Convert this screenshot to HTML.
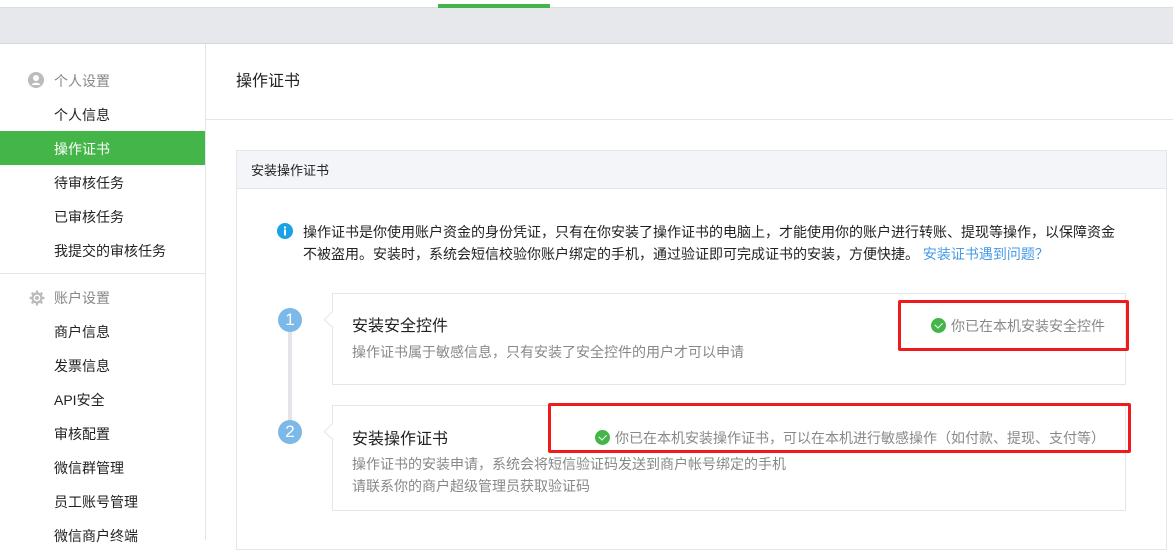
<!DOCTYPE html>
<html><head><meta charset="utf-8"><style>
*{margin:0;padding:0;box-sizing:border-box}
body{width:1173px;height:540px;overflow:hidden;background:#fff;font-family:"Liberation Sans","Noto Sans CJK SC",sans-serif;font-size:14px;color:#222;position:relative}
.a{position:absolute;white-space:nowrap}
.mi{position:absolute;left:54px;font-size:14px;color:#222;line-height:20px}
.g{color:#888}
.chk{display:inline-block;width:15px;height:15px;border-radius:50%;background:#44b549;vertical-align:-2px;margin-right:5px;position:relative}
.chk:after{content:"";position:absolute;left:4px;top:3.5px;width:6px;height:3.5px;border-left:1.6px solid #fff;border-bottom:1.6px solid #fff;transform:rotate(-45deg)}
.circ{position:absolute;left:278px;width:24px;height:24px;border-radius:50%;background:#7cb9e8;color:#fff;text-align:center;line-height:24px;font-size:17px}
.red{position:absolute;border:3px solid #f0191b;border-radius:2px}
</style></head><body>
<div class="a" style="left:0;top:7px;width:1173px;height:37px;background:#e7e8eb;border-top:1px solid #dcdde0;border-bottom:1px solid #d6d7da"></div>
<div class="a" style="left:438px;top:4px;width:112px;height:4px;background:#44b549"></div>
<div class="a" style="left:205px;top:44px;width:1px;height:496px;background:#e4e5e8"></div>
<svg class="a" style="left:28px;top:72px" width="16" height="16" viewBox="0 0 16 16"><circle cx="8" cy="8" r="8" fill="#bbb"/><circle cx="8" cy="6" r="3" fill="#fff"/><path d="M3.5 13c1-3 8-3 9 0z" fill="#fff"/></svg>
<div class="mi g" style="top:71px">个人设置</div>
<div class="mi" style="top:105px">个人信息</div>
<div class="a" style="left:0;top:131px;width:205px;height:34px;background:#44b549"></div>
<div class="mi" style="top:139px;color:#fff">操作证书</div>
<div class="mi" style="top:173px">待审核任务</div>
<div class="mi" style="top:207px">已审核任务</div>
<div class="mi" style="top:241px">我提交的审核任务</div>
<div class="a" style="left:0;top:273px;width:205px;height:1px;background:#e4e5e8"></div>
<svg class="a" style="left:29px;top:290px" width="16" height="16" viewBox="0 0 16 16"><g fill="none" stroke="#bbb" stroke-width="2.2"><circle cx="8" cy="8" r="4.5"/><path d="M8 0.5v3M8 12.5v3M0.5 8h3M12.5 8h3M2.7 2.7l2.1 2.1M11.2 11.2l2.1 2.1M2.7 13.3l2.1-2.1M11.2 4.8l2.1-2.1"/></g><circle cx="8" cy="8" r="2" fill="#bbb"/></svg>
<div class="mi g" style="top:288px">账户设置</div>
<div class="mi" style="top:322px">商户信息</div>
<div class="mi" style="top:356px">发票信息</div>
<div class="mi" style="top:390px">API安全</div>
<div class="mi" style="top:424px">审核配置</div>
<div class="mi" style="top:458px">微信群管理</div>
<div class="mi" style="top:492px">员工账号管理</div>
<div class="mi" style="top:526px">微信商户终端</div>
<div class="a" style="left:236px;top:71px;font-size:16px;line-height:22px">操作证书</div>
<div class="a" style="left:206px;top:119px;width:967px;height:1px;background:#e4e5e8"></div>
<div class="a" style="left:236px;top:150px;width:931px;height:400px;border:1px solid #e4e5e8"></div>
<div class="a" style="left:237px;top:151px;width:929px;height:38px;background:#f4f5f9;border-bottom:1px solid #e4e5e8"></div>
<div class="a" style="left:251px;top:161px;font-size:13px;line-height:20px">安装操作证书</div>
<svg class="a" style="left:277px;top:223px" width="16" height="16" viewBox="0 0 16 16"><circle cx="8" cy="8" r="8" fill="#1aa2e6"/><rect x="7" y="6.5" width="2" height="6" fill="#fff"/><rect x="7" y="3.5" width="2" height="2" fill="#fff"/></svg>
<div class="a" style="left:303px;top:221px;line-height:22px">操作证书是你使用账户资金的身份凭证，只有在你安装了操作证书的电脑上，才能使用你的账户进行转账、提现等操作，以保障资金<br>不被盗用。安装时，系统会短信校验你账户绑定的手机，通过验证即可完成证书的安装，方便快捷。 <span style="color:#459ae9">安装证书遇到问题？</span></div>
<div class="a" style="left:288px;top:330px;width:4px;height:100px;background:#e4e5e8"></div>
<div class="circ" style="top:308px">1</div>
<div class="circ" style="top:420px">2</div>
<div class="a" style="left:332px;top:293px;width:794px;height:92px;border:1px solid #e4e5e8"></div>
<div class="a" style="left:326px;top:314px;width:11px;height:11px;background:#fff;border-left:1px solid #e4e5e8;border-bottom:1px solid #e4e5e8;transform:rotate(45deg)"></div>
<div class="a" style="left:352px;top:316px;font-size:16px;line-height:22px">安装安全控件</div>
<div class="a g" style="left:352px;top:342px;line-height:20px">操作证书属于敏感信息，只有安装了安全控件的用户才可以申请</div>
<div class="a g" style="left:931px;top:316px;line-height:20px"><span class="chk"></span>你已在本机安装安全控件</div>
<div class="a" style="left:332px;top:405px;width:794px;height:106px;border:1px solid #e4e5e8"></div>
<div class="a" style="left:326px;top:426px;width:11px;height:11px;background:#fff;border-left:1px solid #e4e5e8;border-bottom:1px solid #e4e5e8;transform:rotate(45deg)"></div>
<div class="a" style="left:352px;top:429px;font-size:16px;line-height:22px">安装操作证书</div>
<div class="a g" style="left:352px;top:453px;line-height:22px">操作证书的安装申请，系统会将短信验证码发送到商户帐号绑定的手机<br>请联系你的商户超级管理员获取验证码</div>
<div class="a g" style="left:595px;top:428px;line-height:20px"><span class="chk"></span>你已在本机安装操作证书，可以在本机进行敏感操作（如付款、提现、支付等）</div>
<div class="red" style="left:898px;top:300px;width:231px;height:51px"></div>
<div class="red" style="left:548px;top:403px;width:583px;height:50px"></div>
</body></html>
